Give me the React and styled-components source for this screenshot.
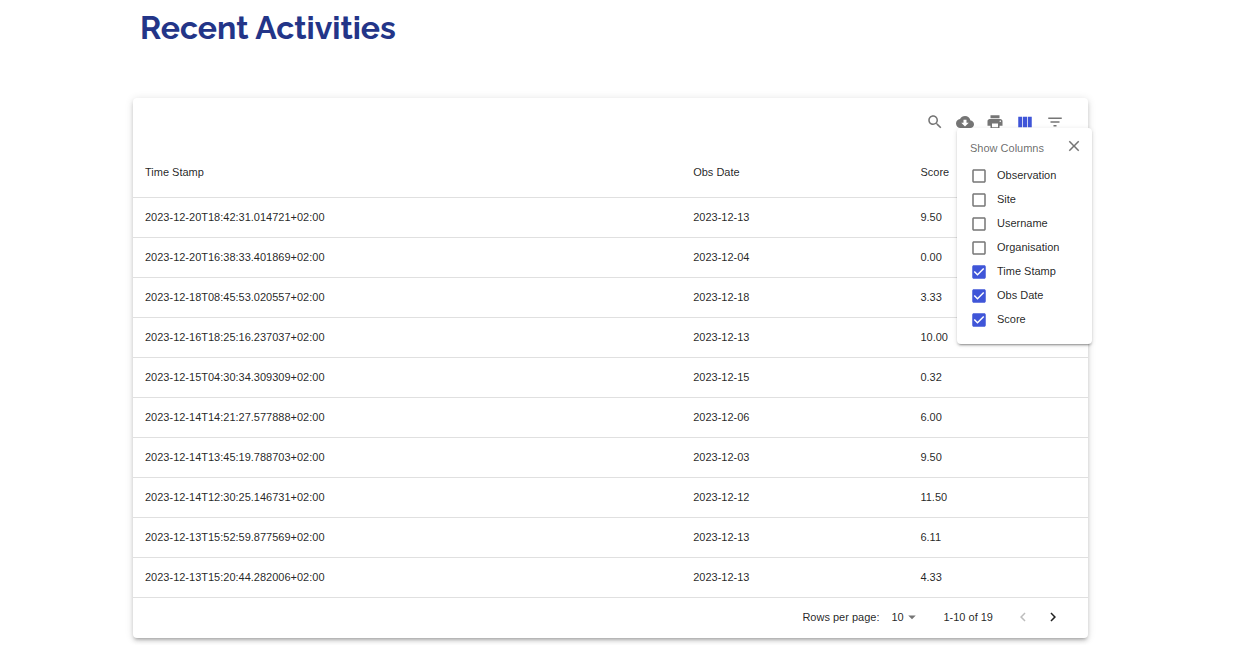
import React, { useState } from "react";
import styled, { createGlobalStyle, css } from "styled-components";

const GlobalStyle = createGlobalStyle`
  *, *::before, *::after { box-sizing: border-box; }
  body {
    margin: 0;
    background: #fff;
    color: rgba(0, 0, 0, 0.87);
    font-family: "Liberation Sans", Arial, sans-serif;
    font-size: 11px;
    line-height: 16px;
  }
`;

const Page = styled.main`
  padding: 8px 160px 8px 133px;
`;

const Title = styled.h1`
  margin: 0 0 50px;
  padding-left: 7px;
  color: #233588;
  font: 700 32px/40px Raleway, Lato, sans-serif;
`;

const Card = styled.section`
  border-radius: 4px;
  background: #fff;
  box-shadow: 0 3px 3px -2px rgba(0, 0, 0, 0.2), 0 3px 4px 0 rgba(0, 0, 0, 0.14),
    0 1px 8px 0 rgba(0, 0, 0, 0.12);
`;

const Toolbar = styled.div`
  position: relative;
  display: flex;
  align-items: center;
  justify-content: flex-end;
  height: 48px;
  padding-right: 18px;
`;

const IconButton = styled.button`
  display: inline-flex;
  align-items: center;
  justify-content: center;
  width: 30px;
  height: 30px;
  padding: 0;
  border: 0;
  border-radius: 50%;
  background: none;
  color: ${(p) => p.$color || "#757575"};
  cursor: pointer;
  &:disabled { cursor: default; }
`;

const Svg = styled.svg`
  display: block;
  flex: none;
  width: 18px;
  height: 18px;
  fill: currentColor;
`;

const Popover = styled.div`
  position: absolute;
  z-index: 1;
  top: 30px;
  right: -4px;
  width: 135px;
  padding: 3px 3px 12px 13px;
  border-radius: 4px;
  background: #fff;
  box-shadow: 0 3px 1px -2px rgba(0, 0, 0, 0.2), 0 2px 2px 0 rgba(0, 0, 0, 0.14),
    0 1px 5px 0 rgba(0, 0, 0, 0.12);
`;

const PopoverHeader = styled.div`
  display: flex;
  align-items: flex-start;
  justify-content: space-between;
  height: 33px;
`;

const PopoverTitle = styled.h2`
  margin: 9px 0 0;
  color: rgba(0, 0, 0, 0.6);
  font-size: 11px;
  font-weight: 400;
  line-height: 16px;
  white-space: nowrap;
`;

const Option = styled.label`
  display: flex;
  align-items: center;
  gap: 9px;
  height: 24px;
  line-height: 22px;
  cursor: pointer;
`;

const OptionText = styled.span`
  height: 24px;
`;

const Check = styled.span`
  position: relative;
  color: ${(p) => (p.$on ? "#3f55d8" : "rgba(0, 0, 0, 0.54)")};
  input {
    position: absolute;
    inset: 0;
    width: 100%;
    height: 100%;
    margin: 0;
    opacity: 0;
    cursor: pointer;
  }
`;

const Table = styled.table`
  width: 100%;
  table-layout: fixed;
  border-collapse: separate;
  border-spacing: 0;
`;

const cell = css`
  padding: 0 12px;
  border-bottom: 1px solid #e0e0e0;
  text-align: left;
  font-weight: 400;
`;

const HeadCell = styled.th`
  ${cell}
  height: 52px;
  width: ${(p) => p.$width};
`;

const Cell = styled.td`
  ${cell}
  height: 40px;
  padding-bottom: 1px;
`;

const Footer = styled.footer`
  display: flex;
  align-items: center;
  justify-content: flex-end;
  height: 40px;
  padding: 0 20px 2px 0;
`;

const SizePicker = styled.label`
  display: flex;
  align-items: center;
  gap: 12px;
  margin-right: 22px;
`;

const SelectWrap = styled.span`
  position: relative;
  display: flex;
  align-items: center;
  color: #757575;
  svg {
    position: absolute;
    right: 0;
    pointer-events: none;
  }
`;

const Select = styled.select`
  appearance: none;
  width: 30px;
  padding: 0;
  border: 0;
  background: none;
  color: rgba(0, 0, 0, 0.87);
  font: inherit;
`;

const Range = styled.span`
  margin-right: 15px;
`;

const paths = {
  search:
    "M15.5 14h-.79l-.28-.27C15.41 12.59 16 11.11 16 9.5 16 5.91 13.09 3 9.5 3S3 5.91 3 9.5 5.91 16 9.5 16c1.61 0 3.09-.59 4.23-1.57l.27.28v.79l5 4.99L20.49 19l-4.99-5zm-6 0C7.01 14 5 11.99 5 9.5S7.01 5 9.5 5 14 7.01 14 9.5 11.99 14 9.5 14z",
  download:
    "M19.35 10.04C18.67 6.59 15.64 4 12 4 9.11 4 6.6 5.64 5.35 8.04 2.34 8.36 0 10.91 0 14c0 3.31 2.69 6 6 6h13c2.76 0 5-2.24 5-5 0-2.64-2.05-4.78-4.65-4.96zM17 13l-5 5-5-5h3V9h4v4h3z",
  print:
    "M19 8H5c-1.66 0-3 1.34-3 3v6h4v4h12v-4h4v-6c0-1.66-1.34-3-3-3zm-3 11H8v-5h8v5zm3-7c-.55 0-1-.45-1-1s.45-1 1-1 1 .45 1 1-.45 1-1 1zm-1-9H6v4h12V3z",
  columns:
    "M14.67 5v14H9.33V5h5.34zm1 14H21V5h-5.33v14zm-7.34 0V5H3v14h5.33z",
  filter: "M10 18h4v-2h-4v2zM3 6v2h18V6H3zm3 7h12v-2H6v2z",
  close:
    "M19 6.41L17.59 5 12 10.59 6.41 5 5 6.41 10.59 12 5 17.59 6.41 19 12 13.41 17.59 19 19 17.59 13.41 12z",
  boxOff:
    "M19 5v14H5V5h14m0-2H5c-1.1 0-2 .9-2 2v14c0 1.1.9 2 2 2h14c1.1 0 2-.9 2-2V5c0-1.1-.9-2-2-2z",
  boxOn:
    "M19 3H5c-1.11 0-2 .9-2 2v14c0 1.1.89 2 2 2h14c1.11 0 2-.9 2-2V5c0-1.1-.89-2-2-2zm-9 14l-5-5 1.41-1.41L10 14.17l7.59-7.59L19 8l-9 9z",
  down: "M7 10l5 5 5-5z",
  left: "M15.41 16.59L10.83 12l4.58-4.59L14 6l-6 6 6 6z",
  right: "M8.59 16.59L13.17 12 8.59 7.41 10 6l6 6-6 6z",
};

const Icon = ({ name }) => (
  <Svg viewBox="0 0 24 24" aria-hidden="true">
    <path d={paths[name]} />
  </Svg>
);

const rows = [
  ["2023-12-20T18:42:31.014721+02:00", "2023-12-13", "9.50"],
  ["2023-12-20T16:38:33.401869+02:00", "2023-12-04", "0.00"],
  ["2023-12-18T08:45:53.020557+02:00", "2023-12-18", "3.33"],
  ["2023-12-16T18:25:16.237037+02:00", "2023-12-13", "10.00"],
  ["2023-12-15T04:30:34.309309+02:00", "2023-12-15", "0.32"],
  ["2023-12-14T14:21:27.577888+02:00", "2023-12-06", "6.00"],
  ["2023-12-14T13:45:19.788703+02:00", "2023-12-03", "9.50"],
  ["2023-12-14T12:30:25.146731+02:00", "2023-12-12", "11.50"],
  ["2023-12-13T15:52:59.877569+02:00", "2023-12-13", "6.11"],
  ["2023-12-13T15:20:44.282006+02:00", "2023-12-13", "4.33"],
];

const options = ["Observation", "Site", "Username", "Organisation", "Time Stamp", "Obs Date", "Score"];

function ColumnMenu() {
  const [shown, setShown] = useState(["Time Stamp", "Obs Date", "Score"]);
  const toggle = (name) =>
    setShown((list) => (list.includes(name) ? list.filter((n) => n !== name) : [...list, name]));

  return (
    <Popover role="dialog" aria-label="Show Columns">
      <PopoverHeader>
        <PopoverTitle>Show Columns</PopoverTitle>
        <IconButton type="button" aria-label="Close">
          <Icon name="close" />
        </IconButton>
      </PopoverHeader>
      {options.map((name) => {
        const on = shown.includes(name);
        return (
          <Option key={name}>
            <Check $on={on}>
              <input type="checkbox" checked={on} onChange={() => toggle(name)} />
              <Icon name={on ? "boxOn" : "boxOff"} />
            </Check>
            <OptionText>{name}</OptionText>
          </Option>
        );
      })}
    </Popover>
  );
}

export default function App() {
  return (
    <>
      <GlobalStyle />
      <Page>
        <Title>Recent Activities</Title>
        <Card>
          <Toolbar>
            <IconButton type="button" aria-label="Search"><Icon name="search" /></IconButton>
            <IconButton type="button" aria-label="Download CSV"><Icon name="download" /></IconButton>
            <IconButton type="button" aria-label="Print"><Icon name="print" /></IconButton>
            <IconButton type="button" aria-label="View Columns" $color="#3f55d8"><Icon name="columns" /></IconButton>
            <IconButton type="button" aria-label="Filter Table"><Icon name="filter" /></IconButton>
            <ColumnMenu />
          </Toolbar>
          <Table>
            <thead>
              <tr>
                <HeadCell scope="col" $width="57.4%">Time Stamp</HeadCell>
                <HeadCell scope="col" $width="23.8%">Obs Date</HeadCell>
                <HeadCell scope="col">Score</HeadCell>
              </tr>
            </thead>
            <tbody>
              {rows.map((row) => (
                <tr key={row[0]}>
                  {row.map((value, i) => <Cell key={i}>{value}</Cell>)}
                </tr>
              ))}
            </tbody>
          </Table>
          <Footer>
            <SizePicker>
              Rows per page:
              <SelectWrap>
                <Select defaultValue="10">
                  <option>10</option>
                  <option>15</option>
                  <option>100</option>
                </Select>
                <Icon name="down" />
              </SelectWrap>
            </SizePicker>
            <Range>1-10 of 19</Range>
            <IconButton type="button" aria-label="Previous Page" disabled $color="rgba(0, 0, 0, 0.26)">
              <Icon name="left" />
            </IconButton>
            <IconButton type="button" aria-label="Next Page" $color="rgba(0, 0, 0, 0.87)">
              <Icon name="right" />
            </IconButton>
          </Footer>
        </Card>
      </Page>
    </>
  );
}
